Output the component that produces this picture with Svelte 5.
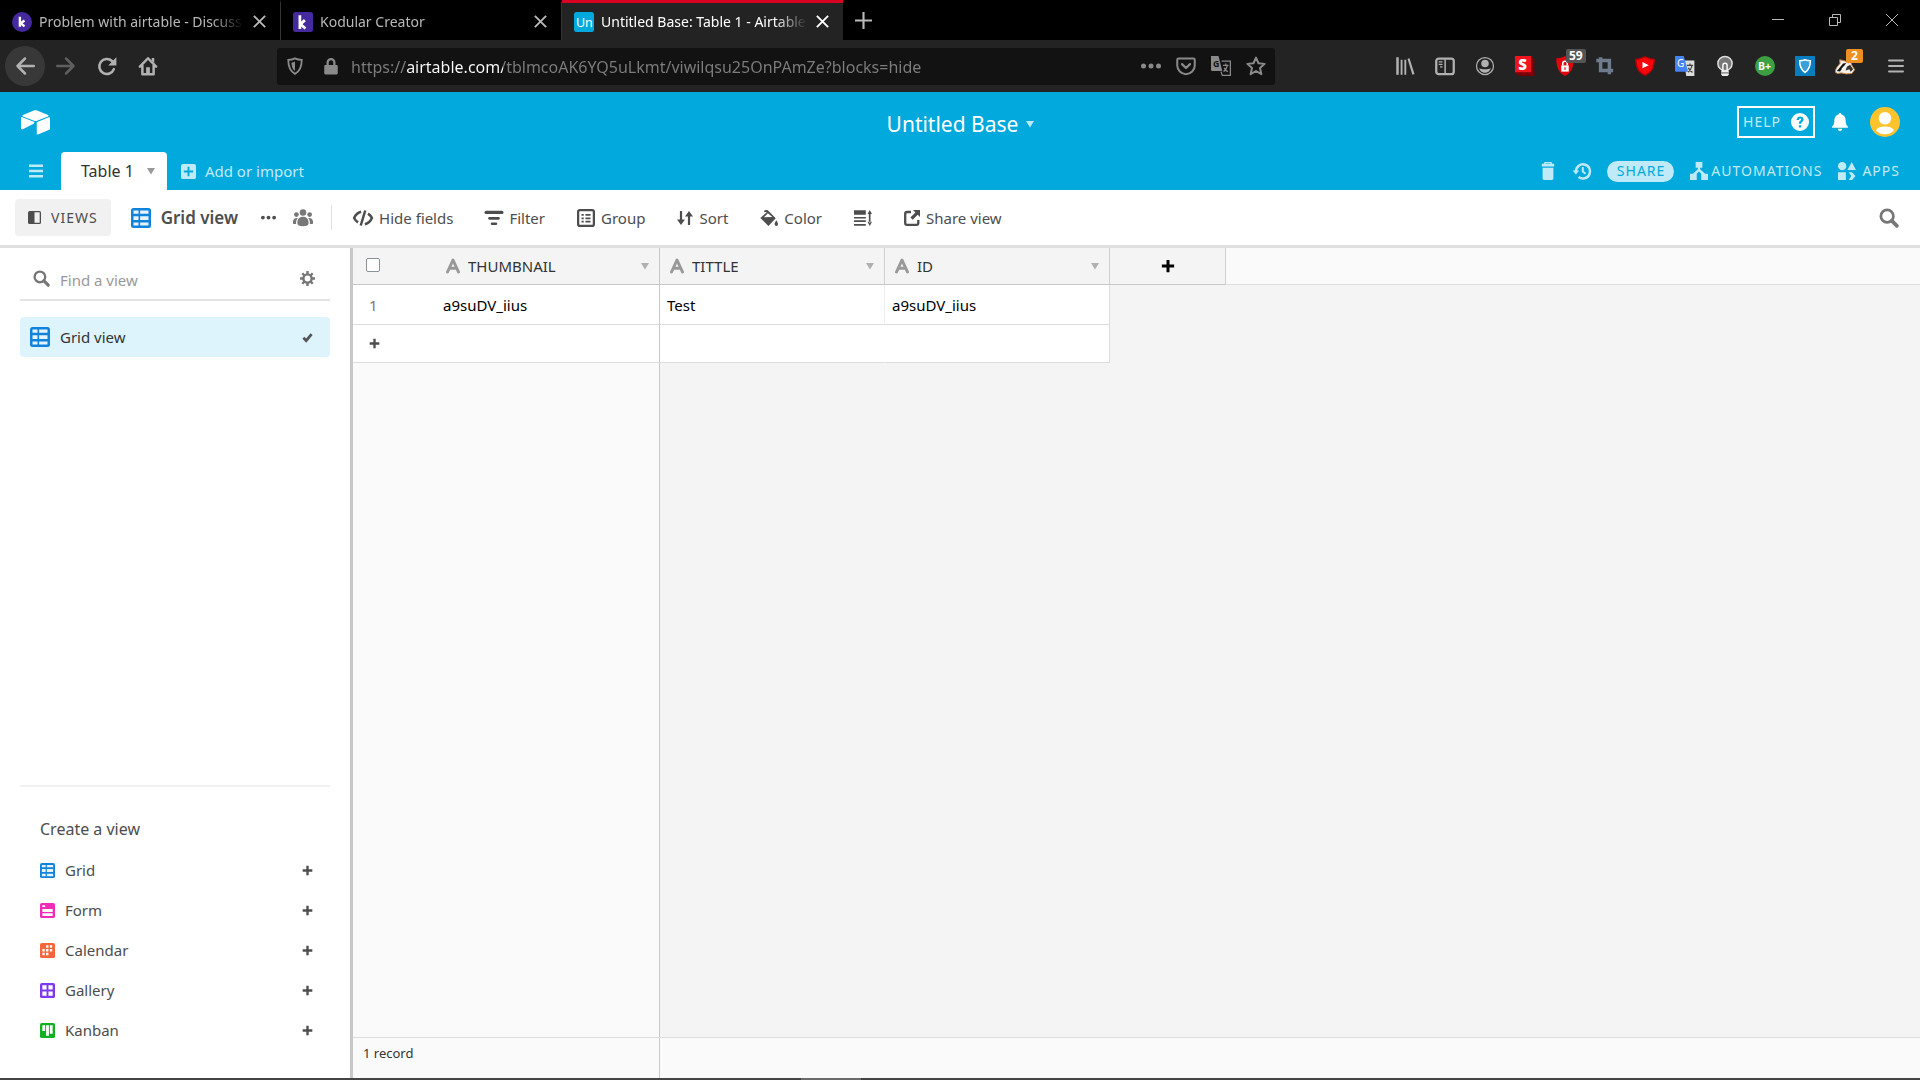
<script>
  const icons = {
    back: '<path d="M15 8H2M8 2L2 8l6 6" fill="none" stroke="currentColor" stroke-width="2" stroke-linecap="round" stroke-linejoin="round"/>',
    forward: '<path d="M1 8h13M8 2l6 6-6 6" fill="none" stroke="currentColor" stroke-width="2" stroke-linecap="round" stroke-linejoin="round"/>',
    reload: '<path d="M13.5 10.5A6 6 0 1 1 12 4l1.500 1.500" fill="none" stroke="currentColor" stroke-width="2" stroke-linecap="round"/><path d="M15.500 1v6.500H9z"/>',
    home: '<path d="M1.500 8.500L8 1.800l6.500 6.700M3.500 7.500v7h9v-7" fill="none" stroke="currentColor" stroke-width="2" stroke-linecap="round" stroke-linejoin="round"/><path d="M6.500 9h3v5.500h-3zM11 1.500h2v4l-2-2z"/>',
    shield: '<path d="M8 1.200c2 1 4 1.300 6 1.300 0 6-1.500 10.300-6 12.500C3.500 12.800 2 8.500 2 2.500c2 0 4-.3 6-1.300z" fill="none" stroke="currentColor" stroke-width="1.600"/><path d="M8 4v8.500C5.800 10.800 5 8.300 4.800 5 6 4.900 7 4.600 8 4z"/>',
    lock: '<path d="M5 7V4.800a3 3 0 0 1 6 0V7" fill="none" stroke="currentColor" stroke-width="2"/><rect x="2" y="7" width="12" height="8.500" rx="1"/>',
    dots: '<circle cx="2" cy="8" r="2"/><circle cx="8" cy="8" r="2"/><circle cx="14" cy="8" r="2"/>',
    pocket: '<path d="M2 2h12a1 1 0 0 1 1 1v4.500a7 7 0 0 1-14 0V3a1 1 0 0 1 1-1z" fill="none" stroke="currentColor" stroke-width="1.600"/><path d="M4.800 6.500L8 9.600l3.200-3.100" fill="none" stroke="currentColor" stroke-width="1.800" stroke-linecap="round" stroke-linejoin="round"/>',
    translate: '<path d="M0 0h6l3 12H1a1 1 0 0 1-1-1z"/><text x="1.500" y="9" font-size="7" font-weight="bold" fill="#121212">G</text><path d="M8.500 4H15.500v11.500H9L8 12.500" fill="none" stroke="currentColor"/><path d="M9.500 7.500h4.500M11.800 6v1.500M13 8c-.5 2-1.500 3.500-3 4.500M10.500 9.500c.7 1.500 1.500 2.300 3 3" fill="none" stroke="currentColor"/>',
    star: '<path d="M8 1.300l2 4.500 4.900.5-3.700 3.300 1.100 4.900L8 12l-4.300 2.500 1.100-4.900L1.100 6.300 6 5.800z" fill="none" stroke="currentColor" stroke-width="1.600" stroke-linejoin="round"/>',
    library: '<path d="M1 1h2v14H1zM4.500 3H6v12H4.500zM7.500 3H9v12H7.500zM10 2.200l1.600-.5 4 12.600-1.700.6z"/>',
    sidebars: '<rect x="1" y="2" width="14" height="12.500" rx="2" fill="none" stroke="currentColor" stroke-width="1.800"/><path d="M7.500 2.500h1.200v11.500H7.500zM3 4.200h3v1H3zM3 6.200h3v1H3zM4 8.200h2v1H4z"/>',
    account: '<circle cx="8" cy="8" r="6.800" fill="none" stroke="currentColor" stroke-width="1"/><circle cx="8" cy="6" r="3"/><path d="M3.500 9.500c1 .9 2.500 1 4.500 1s3.500-.1 4.500-1c0 2-2 3.800-4.500 3.800S3.500 11.500 3.500 9.500z"/>',
    stylish: '<path d="M13 0l2.500 2.500V16H3l-3-3z" fill="#7a0008"/><path d="M0 0h13v13H0z" fill="#f0141e"/><text x="2.600" y="11" font-size="12" font-weight="900" fill="#fff">S</text>',
    adblock: '<path d="M8 0c2 1.300 4 1.800 7 1.800C15 9 13 13.500 8 16 3 13.500 1 9 1 1.800 4 1.800 6 1.300 8 0z" fill="#e2050c"/><rect x="5" y="7.500" width="6" height="5" fill="#fff"/><path d="M6.200 7.500V6a1.800 1.800 0 0 1 3.600 0v1.500" fill="none" stroke="#fff" stroke-width="1.300"/><path d="M7.500 9h1v2h-1z" fill="#e2050c"/>',
    crop: '<path d="M1 3.500h10.500V14.500M4.500 1v10.500H14.500" fill="none" stroke="#6d7b8c" stroke-width="2.800"/>',
    youtube: '<path d="M8 0c3 1.600 5 2 8 2.300C15.600 9 14 13.500 8 16 2 13.500.4 9 0 2.300 3 2 5 1.600 8 0z" fill="#b50006"/><path d="M8 1.200c2.600 1.300 4.500 1.700 6.800 2C14.300 9 13 12.500 8 14.800 3 12.500 1.700 9 1.200 3.200c2.300-.3 4.200-.7 6.800-2z" fill="#f9040b"/><path d="M6 4.800v5l5-2.500z" fill="#fff"/>',
    gtranslate: '<path d="M7 3.500h8.500V16H9z" fill="#ddd"/><path d="M0 0h7l3.500 12.500H1a1 1 0 0 1-1-1z" fill="#4484f0"/><text x="1.600" y="9" font-size="8" fill="#fff">G</text><path d="M9.500 7.500h5M12 6v1.500M13.500 8c-.5 2.500-1.700 4-3 5M10.700 9.500c.9 2 2 3 3.300 3.600" fill="none" stroke="#444"/>',
    bulb: '<circle cx="8" cy="6" r="5.700" fill="#777" stroke="#ddd" stroke-width="1.200"/><path d="M6.300 12V7.500a1.700 1.700 0 0 1 3.400 0V12" fill="none" stroke="#fff" stroke-width="1.100"/><path d="M5 11.500h6v3.500l-1 1H6l-1-1z" fill="#eee"/><path d="M5 13.500h6" stroke="#777"/>',
    bplus: '<circle cx="8" cy="8" r="8" fill="#3d9f43"/><text x="2.300" y="11" font-size="8.500" font-weight="bold" fill="#fff">B+</text>',
    adguard: '<path d="M0 0h16v16H0z" fill="#087ec0"/><path d="M8 3c1.500.6 3 .8 4.300.8 0 4-1 7.200-4.300 9.400-3.300-2.200-4.300-5.400-4.300-9.400C5 3.800 6.500 3.600 8 3z" fill="#3b9fda" stroke="#fff" stroke-width="1.200"/>',
    badger: '<path d="M.3 13c-.2-3 2.200-5 3.700-7L3.800 3 8 4l3 1.500 1.500-1.200.7 2.700 2.500 4-2.200 3-4.500.3-4-.8-3 .5z" fill="#f5efe8" stroke="#c58647" stroke-width=".8"/><path d="M1.500 12c.5-1 1.300-1.200 2-2.500L6.500 6 9 5.500 6.500 9 4 12.300z" fill="#111"/><path d="M8.500 11.500l1-3L12 7l2.500 3.500-2 2-1-2z" fill="#333"/><path d="M5.500 10.500l2-2" stroke="#fff"/>',
    menu: '<path d="M1 2.500h14M1 8h14M1 13.500h14" fill="none" stroke="currentColor" stroke-width="2" stroke-linecap="round"/>',
    close: '<path d="M2 2l12 12M14 2L2 14" fill="none" stroke="currentColor" stroke-width="2"/>',
    plus: '<path d="M8 0v16M0 8h16" fill="none" stroke="currentColor" stroke-width="2"/>',
    minimize: '<path d="M2 7.500h12" stroke="currentColor"/>',
    restore: '<path d="M2.500 5.500h8v8h-8zM5.500 5.500V2.500h8v8h-3" fill="none" stroke="currentColor"/>',
    exit: '<path d="M2 2l12 12M14 2L2 14" fill="none" stroke="currentColor"/>',
    kodular: '<rect width="16" height="16" rx="2" fill="#45299e"/><path d="M5.500 2.500v11M9.500 6.500L6 9.800l4 3.400" fill="none" stroke="#fff" stroke-width="2.200"/>',
    kodularRound: '<circle cx="8" cy="8" r="8" fill="#45299e"/><path d="M6.300 3.800v8M10 6.800L7 9l3 2.500" fill="none" stroke="#fff" stroke-width="1.900"/>',
    untitled: '<rect width="16" height="16" rx="2" fill="#02a9dc"/><text x="1.500" y="12" font-size="10" fill="#fff">Un</text>',
    logo: '<path d="M7.100 .8L1.100 3.300c-.4.1-.4.6 0 .8l6.100 2.400c.5.200 1.100.200 1.600 0l6.100-2.400c.4-.2.4-.7 0-.8L8.900.8c-.6-.2-1.200-.2-1.800 0z"/><path d="M8.700 7.700v6c0 .3.300.5.600.4l6.300-2.600c.2-.1.400-.3.400-.5V5c0-.3-.3-.5-.6-.4L9 7.200c-.2.100-.3.300-.3.500zM7.200 8L1 11.200c-.4.200-1 0-1-.4V5c0-.4.400-.6.700-.5l6.400 2.600c.4.200.4.700.1.900z"/>',
    list: '<path d="M1 1.500h14v2.400H1zM1 6.800h14v2.400H1zM1 12.100h14v2.400H1z"/>',
    caret: '<path d="M0 2h16L8 15z"/>',
    addBox: '<path fill-rule="evenodd" d="M2 0h12a2 2 0 0 1 2 2v12a2 2 0 0 1-2 2H2a2 2 0 0 1-2-2V2a2 2 0 0 1 2-2zm5 3v4H3v2h4v4h2V9h4V7H9V3z"/>',
    question: '<path fill-rule="evenodd" d="M8 0a8 8 0 1 0 0 16A8 8 0 0 0 8 0zM5 6.200C5 4.200 6.300 3 8.100 3c1.800 0 3.100 1.100 3.100 2.700 0 2-2.100 2.200-2.100 3.500v.4H7v-.5c0-2 2-2.200 2-3.300 0-.5-.4-.9-1-.9S7 5.400 7 6.200zM7 10.800h2.100v2.100H7z"/>',
    bell: '<path d="M8 0c.8 0 1.200.5 1.200 1.200C11.800 2 13 4 13 6.500c0 3 .7 4.400 2 5.500.3.400.2 1-.4 1H1.400c-.6 0-.7-.6-.4-1 1.300-1.100 2-2.500 2-5.500C3 4 4.200 2 6.800 1.200 6.800.5 7.200 0 8 0zM6 14h4c0 1.200-.9 2-2 2s-2-.8-2-2z"/>',
    avatar: '<circle cx="8" cy="8" r="8" fill="#fcc32c"/><circle cx="8" cy="6" r="3.300" fill="#fff"/><path d="M3.200 12.400c.8-1.500 2.500-2 4.800-2s4 .5 4.800 2C11.800 13.700 10 14.500 8 14.500s-3.800-.8-4.800-2.100z" fill="#fff"/>',
    trash: '<path fill-rule="evenodd" d="M5 0h6l.8 1.500H13.500V4h-11V1.500h1.700zm.9 1.300-.2.400h4.600l-.2-.4zM3.200 5.200h9.600v9.300c0 .9-.6 1.500-1.500 1.500H4.700c-.9 0-1.500-.6-1.500-1.500z"/>',
    history: '<path d="M2.600 8.500A6.300 6.300 0 1 1 5 13.300" fill="none" stroke="currentColor" stroke-width="2.200"/><path d="M-.3 7.500h5.800L2.600 11z"/><path d="M8.700 4.500v4l2.500 2" fill="none" stroke="currentColor" stroke-width="1.800"/>',
    automations: '<path d="M5 0h6v5H9v1.500l4.500 4H16V16h-6v-5.500L8 8.500l-2 2V16H0v-5.500h2.500L7 6.500V5H5z"/>',
    apps: '<circle cx="3.700" cy="3.700" r="3.700"/><path d="M12.200 0l3.800 7H8.400zM0 9h7v7H0zM9.500 9h3l3 3.500-3 3.500h-3l2.300-3.500z"/>',
    panel: '<path fill-rule="evenodd" d="M2 0h12a2 2 0 0 1 2 2v12a2 2 0 0 1-2 2H2a2 2 0 0 1-2-2V2a2 2 0 0 1 2-2zm6 1.600v12.800h6.400V1.600z"/>',
    grid: '<rect width="16" height="16" rx="2" /><path d="M2 2h4v2.500H2zM7.300 2H14v2.500H7.300zM2 6.500h4v3H2zM7.300 6.500H14v3H7.300zM2 11.500h4V14H2zM7.300 11.500H14V14H7.300z" fill="#e5f4ff"/>',
    form: '<rect width="16" height="16" rx="2"/><path d="M2.500 2.500h3v1.700h-3zM2.500 6.500h11v3h-11zM2.500 11h11v2.800h-11z" fill="#fff"/>',
    calendar: '<rect width="16" height="16" rx="2"/><path d="M6.500 2.500H9V5H6.500zM10.500 2.500H13V5h-2.500zM2.500 6.500H5V9H2.500zM6.500 6.500H9V9H6.500zM10.500 6.500H13V9h-2.500zM2.500 10.500H5V13H2.500zM6.500 10.500H9V13H6.500z" fill="#fff"/>',
    gallery: '<rect width="16" height="16" rx="2"/><path d="M2.500 2.500H7V7H2.500zM9 2.500h4.500V7H9zM2.500 9H7v4.500H2.500zM9 9h4.500v4.500H9z" fill="#fff"/>',
    kanban: '<rect width="16" height="16" rx="2"/><path d="M2.500 2.500h3v6h-3zM6.500 2.500h3v11h-3zM10.500 2.500h3v9h-3z" fill="#fff"/>',
    people: '<circle cx="8" cy="3.600" r="2.600"/><circle cx="2.700" cy="5.200" r="1.900"/><circle cx="13.300" cy="5.200" r="1.900"/><path d="M8 7c3 0 4.500 2 4.500 5 0 2-1.500 2.500-4.500 2.500S3.500 14 3.500 12c0-3 1.500-5 4.500-5zM3.800 8C2.600 9.500 2.400 11 2.500 12.800H.5c-.7 0-.6-1.500-.4-2.600C.4 8.800 1.800 7.600 3.800 8zM12.200 8c1.200 1.500 1.400 3 1.300 4.800h2c.7 0 .6-1.500.4-2.600-.3-1.400-1.700-2.600-3.700-2.200z"/>',
    hide: '<path d="M6.500 3C4 3.700 1.800 5.800.9 8c.6 1.300 1.600 2.500 3.100 3.500M9.500 13c2.500-.7 4.700-2.800 5.600-5-.6-1.300-1.600-2.500-3.100-3.500M9.800 2L6.200 14" fill="none" stroke="currentColor" stroke-width="2"/>',
    filter: '<path d="M1 1.500h14a.8.8 0 0 1 0 3H1a.8.8 0 0 1 0-3zM4 7h8a.6.6 0 0 1 0 2.500H4A.6.6 0 0 1 4 7zM6.200 12h3.600a.6.600 0 0 1 0 2.200H6.200a.6.600 0 0 1 0-2.200z"/>',
    group: '<rect x="1" y="1" width="14" height="14" rx="1.500" fill="none" stroke="currentColor" stroke-width="2"/><path d="M4 4.500h2v1.500H4zM7.500 4.500H12v1.500H7.500zM4 7.500h2v1.500H4zM7.500 7.500H12v1.500H7.500zM4 10.500h2v1.500H4zM7.500 10.500H12v1.500H7.500z"/>',
    sort: '<path d="M4 1v12M12 15V3" fill="none" stroke="currentColor" stroke-width="2.200"/><path d="M0 9.500h8L4 15zM8 6.500h8L12 1z"/>',
    color: '<path d="M3.500 1.500c1.500-1 3.500-.8 4.300.6L14 8.300 7.500 15 .3 8 6 2.800c-.5-.4-1.300-.2-2 .1zM7 3.800L3.500 7.300l7.500-.2z" fill-rule="evenodd"/><path d="M14.500 10c1 1.700 1.500 2.500 1.500 3.500a1.500 1.500 0 0 1-3 0c0-1 .5-1.800 1.500-3.500z"/>',
    height: '<path d="M0 1h10.500v4H0zM0 7h10.500v1.500H0zM0 10h10.500v1.500H0zM0 13.300h10.500v1.500H0zM13.200 4h1.500v8h-1.500zM14 .8l2 3.600h-4zM14 15l2-3.600h-4z"/>',
    share: '<path d="M7 2H3a1.800 1.800 0 0 0-1.800 1.800V13A1.800 1.800 0 0 0 3 14.800h9.500a1.800 1.800 0 0 0 1.800-1.800V10" fill="none" stroke="currentColor" stroke-width="2.300"/><path d="M9 0h7v7l-2.300-2.300-5 5-2.300-2.300 5-5z"/>',
    search: '<circle cx="6.500" cy="6.500" r="5" fill="none" stroke="currentColor" stroke-width="2.200"/><path d="M10.300 10.300l4 4" fill="none" stroke="currentColor" stroke-width="3" stroke-linecap="round"/>',
    gear: '<circle cx="8" cy="8" r="4.400" fill="none" stroke="currentColor" stroke-width="2.600"/><path d="M8 0v3.500M8 12.500V16M0 8h3.500M12.500 8H16M2.400 2.400l2.400 2.400M11.200 11.200l2.400 2.400M13.600 2.400l-2.400 2.400M4.800 11.200l-2.400 2.400" fill="none" stroke="currentColor" stroke-width="2.600"/>',
    check: '<path d="M2 8.500l4 4 8-9.500" fill="none" stroke="currentColor" stroke-width="4"/>',
    bold: '<path d="M8 1v14M1 8h14" fill="none" stroke="currentColor" stroke-width="3.400"/>',
    text: '<path d="M2.500 14L8 2l5.500 12M4.500 10.200h7" fill="none" stroke="currentColor" stroke-width="3" stroke-linecap="round" stroke-linejoin="round"/>',
  };

  const tabs = [
    { title: "Problem with airtable - Discuss", icon: "kodularRound" },
    { title: "Kodular Creator", icon: "kodular" },
    { title: "Untitled Base: Table 1 - Airtable", icon: "untitled" },
  ];

  const extensions = [
    { name: "Library", icon: "library" },
    { name: "Sidebars", icon: "sidebars" },
    { name: "Account", icon: "account" },
    { name: "Stylish", icon: "stylish" },
    { name: "Ad blocker", icon: "adblock", badge: "59" },
    { name: "Crop", icon: "crop" },
    { name: "Video blocker", icon: "youtube" },
    { name: "Translate", icon: "gtranslate" },
    { name: "Lights", icon: "bulb" },
    { name: "B+", icon: "bplus" },
    { name: "Shield", icon: "adguard" },
    { name: "Badger", icon: "badger", badge: "2" },
  ];

  const tools = [
    { label: "Hide fields", icon: "hide", size: 20 },
    { label: "Filter", icon: "filter", size: 18 },
    { label: "Group", icon: "group", size: 18 },
    { label: "Sort", icon: "sort", size: 16 },
    { label: "Color", icon: "color", size: 18 },
    { label: "", icon: "height", size: 18 },
    { label: "Share view", icon: "share", size: 16 },
  ];

  const viewTypes = [
    { label: "Grid", icon: "grid", color: "#1283da" },
    { label: "Form", icon: "form", color: "#f02ab9" },
    { label: "Calendar", icon: "calendar", color: "#f7653b" },
    { label: "Gallery", icon: "gallery", color: "#7c39ed" },
    { label: "Kanban", icon: "kanban", color: "#11af22" },
  ];

  const fields = ["THUMBNAIL", "TITTLE", "ID"];
  const records = [["a9suDV_iius", "Test", "a9suDV_iius"]];

  let url = $state("https://airtable.com/tblmcoAK6YQ5uLkmt/viwilqsu25OnPAmZe?blocks=hide");
  let viewSearch = $state("");
  let activeTab = $state(2);
  let showViews = $state(true);
</script>

{#snippet icon(name, size = 16)}
  <svg width={size} height={size} viewBox="0 0 16 16" fill="currentColor" aria-hidden="true">
    {@html icons[name]}
  </svg>
{/snippet}

<div class="window">
  <div class="tabs">
    {#each tabs as tab, i}
      <div class="tab" class:active={i === activeTab}>
        <button class="tab-name" onclick={() => (activeTab = i)}>
          {@render icon(tab.icon, 20)}
          <span>{tab.title}</span>
        </button>
        <button aria-label="Close tab">{@render icon("close", 15)}</button>
      </div>
    {/each}
    <button class="new-tab" aria-label="New tab">{@render icon("plus", 17)}</button>
    <div class="window-buttons">
      <button aria-label="Minimize">{@render icon("minimize")}</button>
      <button aria-label="Restore">{@render icon("restore")}</button>
      <button aria-label="Close">{@render icon("exit")}</button>
    </div>
  </div>

  <div class="navbar">
    <div class="nav-buttons">
      <button class="back" aria-label="Back">{@render icon("back", 20)}</button>
      <button class="dim" aria-label="Forward">{@render icon("forward", 20)}</button>
      <button aria-label="Reload">{@render icon("reload", 20)}</button>
      <button aria-label="Home">{@render icon("home", 20)}</button>
    </div>
    <div class="address">
      {@render icon("shield", 18)}
      {@render icon("lock", 18)}
      <input type="text" aria-label="Address" bind:value={url} />
      <button aria-label="Page actions">{@render icon("dots", 20)}</button>
      <button aria-label="Save to Pocket">{@render icon("pocket", 20)}</button>
      <button aria-label="Translate page">{@render icon("translate", 20)}</button>
      <button aria-label="Bookmark">{@render icon("star", 20)}</button>
    </div>
    <div class="extensions">
      {#each extensions as ext}
        <button aria-label={ext.name}>
          {@render icon(ext.icon, 20)}
          {#if ext.badge}
            <span class="badge" class:orange={ext.badge === "2"}>{ext.badge}</span>
          {/if}
        </button>
      {/each}
    </div>
    <button class="app-menu" aria-label="Menu">{@render icon("menu")}</button>
  </div>

  <header>
    <div class="base-bar">
      <a class="logo" href="#home" aria-label="Home">{@render icon("logo", 29)}</a>
      <button class="base-name">Untitled Base {@render icon("caret", 8)}</button>
      <div class="account">
        <button class="help">HELP {@render icon("question", 18)}</button>
        <button aria-label="Notifications">{@render icon("bell", 18)}</button>
        <button class="avatar" aria-label="Account">{@render icon("avatar", 30)}</button>
      </div>
    </div>
    <div class="table-bar">
      <button class="all-tables" aria-label="All tables">{@render icon("list", 16)}</button>
      <button class="table-tab">Table 1 {@render icon("caret", 8)}</button>
      <button class="add-table">{@render icon("addBox", 15)} Add or import</button>
      <div class="table-actions">
        <button aria-label="Trash">{@render icon("trash", 18)}</button>
        <button aria-label="History">{@render icon("history", 18)}</button>
        <button class="share">SHARE</button>
        <button class="automations">{@render icon("automations", 18)}AUTOMATIONS</button>
        <button class="apps">{@render icon("apps", 18)}APPS</button>
      </div>
    </div>
  </header>

  <div class="toolbar">
    <button class="views" onclick={() => (showViews = !showViews)}>
      {@render icon("panel", 13)} VIEWS
    </button>
    <button class="current-view">
      <span class="blue">{@render icon("grid", 20)}</span> Grid view
    </button>
    <button class="more" aria-label="View options">{@render icon("dots", 15)}</button>
    <button class="collab" aria-label="Collaborative view">{@render icon("people", 20)}</button>
    <div class="tools">
      {#each tools as tool}
        <button aria-label={tool.label || "Row height"}>
          {@render icon(tool.icon, tool.size)}
          {tool.label}
        </button>
      {/each}
    </div>
    <button class="search" aria-label="Search">{@render icon("search", 20)}</button>
  </div>

  <div class="content">
    {#if showViews}
      <aside>
        <div class="find">
          {@render icon("search", 17)}
          <input type="text" placeholder="Find a view" aria-label="Find a view" bind:value={viewSearch} />
          <button aria-label="View settings">{@render icon("gear", 15)}</button>
        </div>
        <button class="view-item">
          <span class="blue">{@render icon("grid", 20)}</span>
          <span class="label">Grid view</span>
          <span class="check">{@render icon("check", 11)}</span>
        </button>
        <div class="create">
          <h2>Create a view</h2>
          {#each viewTypes as type}
            <button>
              <span style:color={type.color}>{@render icon(type.icon, 15)}</span>
              <span class="label">{type.label}</span>
              {@render icon("bold", 11)}
            </button>
          {/each}
        </div>
      </aside>
    {/if}

    <main>
      <table>
        <colgroup>
          <col class="col-number" />
          <col class="col-primary" />
          <col class="col-field" />
          <col class="col-field" />
          <col class="col-add" />
          <col />
        </colgroup>
        <thead>
          <tr>
            <th><input type="checkbox" aria-label="Select all records" /></th>
            {#each fields as field}
              <th>
                <div class="field">
                  {@render icon("text", 16)}
                  <span class="label">{field}</span>
                  {@render icon("caret", 8)}
                </div>
              </th>
            {/each}
            <th class="add-field">
              <button aria-label="Add field">{@render icon("bold", 14)}</button>
            </th>
            <th class="rest"></th>
          </tr>
        </thead>
        <tbody>
          {#each records as record, i}
            <tr>
              <td class="number">{i + 1}</td>
              {#each record as cell}
                <td>{cell}</td>
              {/each}
            </tr>
          {/each}
          <tr class="add-row">
            <td class="number">
              <button aria-label="Add record">{@render icon("bold", 11)}</button>
            </td>
            <td></td>
            <td></td>
            <td></td>
          </tr>
        </tbody>
      </table>
      <div class="split empty">
        <div></div>
        <div></div>
      </div>
      <footer class="split">
        <div>{records.length} record</div>
        <div></div>
      </footer>
    </main>
  </div>
  <div class="taskbar"><span></span></div>
</div>

<style>
  :global(body) {
    margin: 0;
  }

  .window {
    display: flex;
    flex-direction: column;
    min-height: 100vh;
    font-family: "Noto Sans", "Open Sans", sans-serif;
    font-size: 15px;
    line-height: 20px;
    color: #333;
    background: #fff;
  }

  button,
  input {
    margin: 0;
    padding: 0;
    border: none;
    background: none;
    font: inherit;
    letter-spacing: inherit;
    color: inherit;
  }

  button {
    display: flex;
    align-items: center;
    cursor: pointer;
    white-space: nowrap;
  }

  svg {
    display: block;
    flex: none;
    overflow: visible;
  }

  .label {
    flex: 1;
    text-align: left;
  }

  .blue {
    color: #1283da;
  }

  /* browser */
  .tabs {
    display: flex;
    height: 40px;
    background: #000;
    color: #b9b9b9;
    font-size: 14px;
  }

  .tab {
    display: flex;
    align-items: center;
    width: 281px;
    padding: 0 13px 0 12px;
    gap: 8px;
    box-sizing: border-box;
    border-right: 1px solid #333;
    border-top: 3px solid transparent;
  }

  .tab.active {
    color: #fff;
    background: #232323;
    border-top-color: #d70022;
    border-right: none;
  }

  .tab-name {
    flex: 1;
    min-width: 0;
    gap: 7px;
  }

  .tab-name span {
    flex: 1;
    overflow: hidden;
    text-align: left;
    mask-image: linear-gradient(to left, transparent, #000 32px);
  }

  .new-tab {
    padding: 0 12px;
  }

  .window-buttons {
    display: flex;
    margin-left: auto;
  }

  .window-buttons button {
    width: 57px;
    justify-content: center;
  }

  .navbar {
    display: flex;
    align-items: center;
    height: 52px;
    background: #232323;
    color: #b1b1b1;
  }

  .nav-buttons {
    display: flex;
    width: 277px;
    padding-left: 5px;
    gap: 1px;
    box-sizing: border-box;
  }

  .nav-buttons button {
    width: 40px;
    height: 40px;
    justify-content: center;
    border-radius: 50%;
  }

  .nav-buttons .back {
    background: #383838;
  }

  .nav-buttons .dim {
    color: #5f5f5f;
  }

  .address {
    display: flex;
    flex: 1;
    align-items: center;
    height: 37px;
    padding: 0 9px;
    gap: 15px;
    border-radius: 3px;
    background: #121212;
    color: #8a8a8a;
    font-size: 16px;
  }

  .address svg:nth-of-type(2) {
    margin-left: 3px;
    margin-right: -4px;
  }

  /* the host name is brighter than the rest of the address */
  .address input {
    flex: 1;
    padding-top: 2px;
    color: transparent;
    caret-color: #fff;
    background: linear-gradient(90deg, #7d7d7d 56px, #fff 56px, #fff 152px, #7d7d7d 152px);
    background-clip: text;
    -webkit-background-clip: text;
  }

  .extensions {
    display: flex;
    margin-left: 110px;
  }

  .extensions button {
    position: relative;
    width: 40px;
    height: 40px;
    justify-content: center;
  }

  .badge {
    position: absolute;
    top: 3px;
    left: 21px;
    padding: 0 3px;
    border-radius: 2px;
    background: #555;
    color: #fff;
    font-size: 12px;
    font-weight: bold;
    line-height: 14px;
  }

  .badge.orange {
    padding: 0 5px;
    background: #ee8f22;
  }

  .app-menu {
    margin: 0 16px 0 23px;
  }

  /* base header */
  header {
    background: #02a9dc;
    color: #fff;
  }

  .base-bar {
    display: grid;
    grid-template-columns: 1fr auto 1fr;
    align-items: center;
    height: 60px;
    padding: 0 20px 0 21px;
  }

  .logo {
    width: 30px;
    padding-top: 2px;
    color: #fff;
  }

  .base-name {
    gap: 8px;
    padding-top: 3px;
    font-size: 21px;
    line-height: 28px;
  }

  .base-name svg {
    color: #c0eaf7;
  }

  .account {
    display: flex;
    align-items: center;
    justify-content: flex-end;
    gap: 16px;
  }

  .help {
    height: 32px;
    padding: 0 4px;
    gap: 10px;
    border: 2px solid #fff;
    font-size: 14px;
    letter-spacing: 1px;
    color: #c0eaf7;
  }

  .help svg {
    color: #fff;
  }

  .avatar {
    margin-left: 5px;
  }

  .table-bar {
    display: flex;
    height: 38px;
    padding: 0 20px 0 28px;
    color: #c0eaf7;
  }

  .table-tab {
    margin-left: 17px;
    padding: 0 12px 0 20px;
    gap: 13px;
    border-radius: 4px 4px 0 0;
    background: #fff;
    color: #333;
    font-size: 16px;
  }

  .table-tab svg {
    color: #999;
  }

  .add-table {
    margin-left: 14px;
    gap: 9px;
  }

  .table-actions {
    display: flex;
    align-items: center;
    margin-left: auto;
    gap: 16px;
    font-size: 14px;
    letter-spacing: 1px;
  }

  .share {
    height: 21px;
    padding: 0 9px 0 10px;
    border-radius: 11px;
    background: #c0eaf7;
    color: #02a9dc;
  }

  .automations {
    gap: 3px;
  }

  .apps {
    gap: 6px;
  }

  /* view toolbar */
  .toolbar {
    display: flex;
    align-items: center;
    height: 55px;
    padding: 0 21px 0 15px;
    border-bottom: 3px solid #e0e0e0;
    color: #4d4d4d;
  }

  .views {
    height: 37px;
    padding: 0 13px;
    gap: 10px;
    border-radius: 4px;
    background: #f1f1f1;
    font-size: 14px;
    letter-spacing: 1px;
  }

  .current-view {
    margin-left: 20px;
    gap: 10px;
    font-size: 17px;
    font-weight: 600;
  }

  .more {
    margin-left: 23px;
  }

  .collab {
    margin-left: 17px;
    color: #777;
  }

  .tools {
    display: flex;
    align-items: center;
    height: 25px;
    margin-left: 18px;
    padding-left: 21px;
    gap: 32px;
    border-left: 1px solid #e0e0e0;
  }

  .tools button {
    gap: 6px;
  }

  .search {
    margin-left: auto;
    color: #777;
  }

  .content {
    display: flex;
    flex: 1;
  }

  /* views sidebar */
  aside {
    display: flex;
    flex-direction: column;
    width: 350px;
    padding: 10px 20px 28px;
    box-sizing: border-box;
  }

  .find {
    display: flex;
    align-items: center;
    height: 41px;
    padding: 0 15px 0 13px;
    gap: 10px;
    border-bottom: 2px solid #e4e4e4;
    color: #777;
  }

  .find input {
    flex: 1;
    min-width: 0;
    padding-top: 2px;
  }

  .find input::placeholder {
    color: #999;
  }

  .view-item {
    height: 40px;
    margin-top: 16px;
    padding: 0 17px 0 10px;
    gap: 10px;
    border-radius: 4px;
    background: #ddf4fd;
  }

  .check {
    color: #555;
  }

  .create {
    margin-top: auto;
    padding: 32px 17px 0 20px;
    border-top: 2px solid #f1f1f1;
    color: #4d4d4d;
  }

  .create h2 {
    margin: 0 0 11px;
    font-size: 16px;
    font-weight: normal;
  }

  .create button {
    width: 100%;
    height: 40px;
    gap: 10px;
  }

  /* records */
  main {
    display: flex;
    flex: 1;
    flex-direction: column;
    border-left: 3px solid #c8c8c8;
    background: #f4f4f4;
  }

  table {
    width: 100%;
    table-layout: fixed;
    border-collapse: separate;
    border-spacing: 0;
  }

  .col-number {
    width: 83px;
  }

  .col-primary {
    width: 224px;
  }

  .col-field {
    width: 225px;
  }

  .col-add {
    width: 116px;
  }

  th,
  td {
    box-sizing: border-box;
    padding: 0 7px;
    text-align: left;
    font-weight: normal;
  }

  th {
    height: 37px;
    border-bottom: 1px solid #c8c8c8;
    background: #f4f4f4;
  }

  th + th {
    border-right: 1px solid #d0d0d0;
  }

  th.rest {
    border-right: none;
    border-bottom-color: #ddd;
    background: #fafafa;
  }

  th:nth-child(2),
  td:nth-child(2) {
    border-right: 1px solid #c8c8c8;
  }

  th input {
    display: block;
    width: 14px;
    height: 14px;
    margin: -2px 0 0 6px;
    appearance: none;
    box-sizing: border-box;
    border: 1px solid #8a939c;
    border-radius: 2px;
    background: #fff;
  }

  .field {
    display: flex;
    align-items: center;
    padding: 0 3px 0 2px;
    gap: 7px;
  }

  .field svg:first-child {
    color: #999;
  }

  .field svg:last-child {
    color: #b0b0b0;
  }

  .add-field button {
    width: 100%;
    justify-content: center;
    color: #000;
  }

  td {
    height: 40px;
    border-bottom: 1px solid #ddd;
    background: #fff;
    color: #000;
  }

  td:nth-child(3) {
    border-right: 1px solid #eee;
  }

  td:nth-child(4) {
    border-right: 1px solid #ddd;
  }

  .number {
    padding-left: 16px;
    color: #777;
  }

  .add-row td {
    height: 38px;
  }

  .add-row td:nth-child(3) {
    border-right-color: #fff;
  }

  .add-row button {
    color: #4d4d4d;
  }

  .split {
    display: grid;
    grid-template-columns: 307px 1fr;
  }

  .split > :first-child {
    border-right: 1px solid #c8c8c8;
    background: #fafafa;
  }

  .empty {
    flex: 1;
  }

  footer {
    height: 40px;
    border-top: 1px solid #ddd;
    background: #fafafa;
    font-size: 13px;
    line-height: 30px;
  }

  footer > :first-child {
    padding-left: 10px;
  }

  .taskbar {
    height: 2px;
    padding-left: 41.7%;
    background: #444;
  }

  .taskbar span {
    display: block;
    width: 60px;
    height: 2px;
    background: #6b6b6b;
  }
</style>
